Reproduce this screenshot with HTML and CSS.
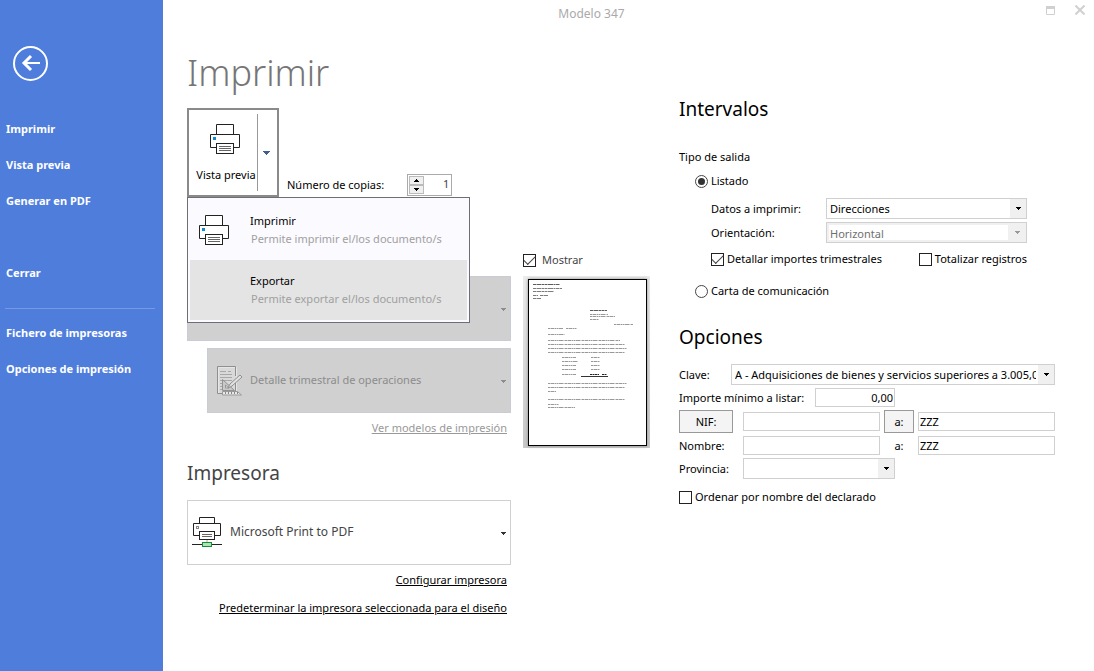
FILE: index.html
```html
<!DOCTYPE html>
<html lang="es">
<head>
<meta charset="utf-8">
<meta name="viewport" content="width=device-width, initial-scale=1">
<title>Modelo 347</title>
<link rel="stylesheet" href="styles.css">
</head>
<body>
<svg class="defs" aria-hidden="true">
  <symbol id="printer" viewBox="0 0 30 30">
    <path d="M6.5 10V.5h17V10M6.500 23.500H.5v-13h29v13h-6" fill="#fff" stroke="#222" />
    <rect x="6.500" y="19.500" width="17" height="10" fill="#fff" stroke="#222" />
    <path d="M9 22.500h12M9 24.500h12M9 26.500h12" stroke="#666" />
    <rect x="3" y="13" width="3" height="3" fill="#0f8ad4" />
  </symbol>
  <symbol id="arrow" viewBox="0 0 7 4"><path d="M0 0h7v1h-1v1h-1v1h-1v1h-1v-1h-1v-1h-1v-1h-1z" fill="currentColor" /></symbol>
  <symbol id="arrow-small" viewBox="0 0 5 3"><path d="M0 0h5v1h-1v1h-1v1h-1v-1h-1v-1h-1z" fill="currentColor" /></symbol>
</svg>
<div class="app">
  <aside class="sidebar">
    <button class="back" type="button" aria-label="Volver">
      <svg viewBox="0 0 35 35" width="35" height="35" fill="none" stroke="#fff"><circle cx="17.500" cy="17.500" r="16.500" stroke-width="2" /><path d="M10 17H27" stroke-width="2" /><path d="M18 10L11 17L18 24" stroke-width="3" /></svg>
    </button>
    <nav class="nav">
      <a href="#">Imprimir</a>
      <a href="#">Vista previa</a>
      <a href="#">Generar en PDF</a>
      <a class="nav-close" href="#">Cerrar</a>
      <hr>
      <a href="#">Fichero de impresoras</a>
      <a href="#">Opciones de impresión</a>
    </nav>
  </aside>
  <main class="main">
    <header class="titlebar">
      <span class="titlebar-text">Modelo 347</span>
      <span class="window-buttons">
        <button type="button" aria-label="Maximizar"><svg width="9" height="9" viewBox="0 0 9 9"><path d="M.5.5h8v8h-8z" fill="none" stroke="#d0d0d0" /><path d="M0 0h9v3H0z" fill="#d0d0d0" /></svg></button>
        <button type="button" aria-label="Cerrar ventana"><svg width="10" height="10" viewBox="0 0 10 10"><path d="M.5.500l9 9M9.500.500l-9 9" stroke="#d0d0d0" stroke-width="2" /></svg></button>
      </span>
    </header>
    <h1>Imprimir</h1>
    <div class="columns">
      <section class="print">
        <div class="tools">
          <div class="split">
            <button class="split-main" type="button"><svg width="30" height="30"><use href="#printer" /></svg><span>Vista previa</span></button>
            <button class="split-arrow" type="button" aria-label="Más acciones"><svg width="7" height="4"><use href="#arrow" /></svg></button>
            <div class="menu" role="menu">
              <button class="menu-item" type="button" role="menuitem"><svg width="30" height="30"><use href="#printer" /></svg><span class="menu-text"><span>Imprimir</span><small>Permite imprimir el/los documento/s</small></span></button>
              <button class="menu-item menu-item-active" type="button" role="menuitem"><span class="menu-text"><span>Exportar</span><small>Permite exportar el/los documento/s</small></span></button>
            </div>
          </div>
          <div class="copies">
            <label for="copies">Número de copias:</label>
            <span class="spinner">
              <span class="spinner-buttons">
                <button type="button" aria-label="Aumentar"><svg class="flip" width="5" height="3"><use href="#arrow-small" /></svg></button>
                <button type="button" aria-label="Reducir"><svg width="5" height="3"><use href="#arrow-small" /></svg></button>
              </span>
              <input id="copies" type="text" inputmode="numeric" value="1">
            </span>
          </div>
        </div>
        <div class="card card-disabled card-model">
          <select aria-label="Modelo" disabled><option></option></select>
          <svg class="caret" width="5" height="3"><use href="#arrow-small" /></svg>
        </div>
        <div class="card card-disabled card-detail">
          <svg class="card-icon" width="26" height="30" viewBox="0 0 26 30" fill="none">
            <path d="M1.500 27.500h18v-26h-18z" fill="#d9d9d9" stroke="#e6e6e6" />
            <path d="M5 27.500H.5v-27h18V10M18.500 17v8" stroke="#8f8f8f" />
            <path d="M3 5.500h6M11 5.500h3M3 8.500h12M3 11.500h12M3 14.500h12M3 17.500h2M3 20.500h2M3 23.500h2" stroke="#a8a8a8" />
            <path d="M5.500 24.500v-11l12 11z" fill="#c9c9c9" stroke="#929292" />
            <path d="M8.500 22v-3l3.500 3z" fill="#e5e5e5" stroke="#999" />
            <path d="M11 22l2-4L23 9l2 2-10 9z" fill="#e2e2e2" stroke="#8f8f8f" />
            <path d="M5.500 25.500h15l4 3.500h-19z" fill="#e8e8e8" stroke="#999" />
            <path d="M8.500 26v2M11.500 26v2M14.500 26v2M17.500 26v2M20.500 26v2" stroke="#888" />
          </svg>
          <select aria-label="Detalle" disabled><option>Detalle trimestral de operaciones</option></select>
          <svg class="caret" width="5" height="3"><use href="#arrow-small" /></svg>
        </div>
        <p class="link-row link-row-models"><a class="muted" href="#">Ver modelos de impresión</a></p>
        <h2 class="printer-title">Impresora</h2>
        <div class="card card-printer">
          <svg class="card-icon" width="30" height="31" viewBox="0 0 30 31" fill="none">
            <path d="M7.500 6V.5h15V6M7.500 18.500h-6v-12h27v12h-6" stroke="#222" />
            <rect x="7.500" y="14.500" width="15" height="8" fill="#fff" stroke="#222" />
            <path d="M10 17.500h10M10 19.500h10" stroke="#666" />
            <rect x="4.500" y="9.500" width="2" height="2" stroke="#888" />
            <path d="M15 23v2" stroke="#aaa" /><path d="M0 27.500h30" stroke="#222" />
            <rect x="10.500" y="25.500" width="9" height="4" fill="#b4dfbb" stroke="#119130" />
          </svg>
          <select aria-label="Impresora"><option>Microsoft Print to PDF</option></select>
          <svg class="caret" width="5" height="3"><use href="#arrow-small" /></svg>
        </div>
        <p class="link-row link-row-config"><a href="#">Configurar impresora</a></p>
        <p class="link-row link-row-default"><a href="#">Predeterminar la impresora seleccionada para el diseño</a></p>
      </section>

      <section class="preview">
        <label class="check preview-check"><input type="checkbox" checked>Mostrar</label>
        <div class="sheet-frame">
          <svg class="sheet" viewBox="0 0 117 165" role="img" aria-label="Carta">
            <g stroke="#333" stroke-dasharray="3 .5 5 .5 2 .5" opacity=".8">
              <path d="M4 4.500h27M61 30.500h17" stroke-width="1.200" />
              <path d="M4 8.500h29M4 11.500h21M4 15.500h5M11 15.500h8M4 18.500h8" stroke-width=".8" />
            </g>
            <g stroke="#555" stroke-width=".8" stroke-dasharray="2 .5 4 .5 1 .5" opacity=".75">
              <path d="M61 34.500h18M61 36.500h25M61 39.500h9M85 44.500h19M19 48.500h15M37 48.500h11M19 54.500h17" />
              <path d="M19 60.500h72M19 64.500h77M19 68.500h79M19 72.500h77" />
              <path d="M33 77.500h14M33 81.500h16M33 85.500h14M33 89.500h14M33 94.500h14M62 77.500h9M62 81.500h9M62 85.500h9M62 89.500h9" />
              <path d="M19 103.500h79M19 107.500h77M19 111.500h8M19 119.500h77M19 124.500h11M19 127.500h27" />
            </g>
            <path d="M61 94.500h9M73 94.500h5" stroke="#222" stroke-dasharray="2 .5" />
            <path d="M52 96.500h27" stroke="#333" />
          </svg>
        </div>
      </section>

      <form class="settings">
        <h2>Intervalos</h2>
        <fieldset>
          <legend>Tipo de salida</legend>
          <label class="check radio-listed"><input type="radio" name="output" checked>Listado</label>
          <div class="sub">
            <div class="row row-data">
              <label for="data">Datos a imprimir:</label>
              <span class="select"><select id="data"><option>Direcciones</option></select><span class="select-button"><svg width="5" height="3"><use href="#arrow-small" /></svg></span></span>
            </div>
            <div class="row">
              <label for="orientation">Orientación:</label>
              <span class="select select-disabled"><select id="orientation" disabled><option>Horizontal</option></select><span class="select-button"><svg width="5" height="3"><use href="#arrow-small" /></svg></span></span>
            </div>
            <div class="checks">
              <label class="check"><input type="checkbox" checked>Detallar importes trimestrales</label>
              <label class="check"><input type="checkbox">Totalizar registros</label>
            </div>
          </div>
          <label class="check radio-letter"><input type="radio" name="output">Carta de comunicación</label>
        </fieldset>
        <h2 class="options-title">Opciones</h2>
        <div class="row row-key">
          <label for="key">Clave:</label>
          <span class="select"><select id="key"><option>A - Adquisiciones de bienes y servicios superiores a 3.005,06 euros</option></select><span class="select-button"><svg width="5" height="3"><use href="#arrow-small" /></svg></span></span>
        </div>
        <div class="row row-amount">
          <label for="amount">Importe mínimo a listar:</label>
          <input class="field amount" id="amount" type="text" value="0,00">
        </div>
        <div class="range">
          <button class="push push-nif" type="button">NIF:</button>
          <input class="field" type="text" aria-label="NIF desde">
          <button class="push push-to" type="button">a:</button>
          <input class="field" type="text" aria-label="NIF hasta" value="ZZZ">
        </div>
        <div class="range">
          <label for="name-from">Nombre:</label>
          <input class="field" id="name-from" type="text">
          <label class="to" for="name-to">a:</label>
          <input class="field" id="name-to" type="text" value="ZZZ">
        </div>
        <div class="row row-province">
          <label for="province">Provincia:</label>
          <span class="select"><select id="province"><option></option></select><span class="select-button"><svg width="5" height="3"><use href="#arrow-small" /></svg></span></span>
        </div>
        <label class="check order"><input type="checkbox">Ordenar por nombre del declarado</label>
      </form>
    </div>
  </main>
</div>
</body>
</html>
```
FILE: styles.css
```css
* { box-sizing: border-box; }
body {
  margin: 0;
  background: #fff;
  color: #000;
  font: 11px/18px "Noto Sans", "Open Sans", sans-serif;
}
button, input, select { font: inherit; color: inherit; border-radius: 0; margin: 0; }
button { padding: 0; border: 0; background: none; }
svg { display: block; flex: none; }
.defs { position: absolute; width: 0; height: 0; }

.app { display: grid; grid-template-columns: 163px 1fr; min-height: 100vh; }

.sidebar { background: #4e7ddc; padding-top: 46px; }
.back { display: block; margin-left: 13px; }
.nav { display: flex; flex-direction: column; margin-top: 30px; }
.nav a {
  padding: 0 6px;
  color: #fff;
  font-weight: 700;
  line-height: 36px;
  text-decoration: none;
  white-space: nowrap;
}
.nav .nav-close { margin-top: 36px; }
.nav hr { width: 150px; height: 1px; margin: 17px 5px 6px; border: 0; background: #7898e4; }

.main { padding: 0 39px 24px 24px; }
.titlebar { display: flex; align-items: center; height: 28px; margin: 0 -39px 0 -24px; }
.titlebar-text { flex: 1; text-align: center; font-size: 12px; color: #aaa; }
.window-buttons { display: flex; gap: 20px; width: 74px; padding: 0 9px 8px 26px; align-items: center; }

h1, h2, p { margin: 0; font-weight: 400; }
h1 { padding-top: 22px; font-size: 36px; line-height: 45px; font-weight: 300; color: #767676; }
h2 { font-size: 19px; line-height: 28px; }

.columns { display: grid; grid-template-columns: 324fr 168px 376fr; }
.print, .settings { min-width: 0; }
.preview { margin-left: 12px; width: 127px; }

.tools { display: flex; gap: 8px; align-items: flex-end; margin-top: 13px; }
.split { position: relative; display: flex; width: 92px; height: 89px; border: 2px solid #8a8a8a; }
.split-main { display: flex; flex-direction: column; align-items: center; width: 68px; padding: 14px 0 0 6px; white-space: nowrap; }
.split-main svg { margin-right: 3px; }
.split-main span { margin-top: 12px; }
.split-arrow { flex: 1; display: flex; align-items: center; justify-content: center; margin: 4px 0; padding-right: 3px; border-left: 1px solid #999; color: #465c8c; }
.menu {
  position: absolute;
  top: 87px;
  left: -2px;
  width: 283px;
  padding: 0 2px 2px;
  border: 1px solid #6e6e76;
  background: #fbfaff;
  z-index: 1;
}
.menu-item { display: flex; align-items: center; width: 100%; height: 62px; padding: 2px 0 0 9px; text-align: left; }
.menu-item-active { height: 60px; background: #e4e4e4; padding: 0 0 0 60px; }
.menu-text { display: flex; flex-direction: column; }
.menu-item svg + .menu-text { margin-left: 21px; }
.menu-text small { font-size: 11px; color: #a0a0a0; padding-left: 1px; }

.copies { display: flex; align-items: center; gap: 23px; height: 24px; }
.spinner { display: flex; width: 45px; height: 22px; border: 1px solid #aaa; padding: 1px; }
.spinner-buttons { display: grid; width: 15px; flex: none; }
.spinner-buttons button { display: flex; align-items: center; justify-content: center; border: 1px solid #bbb; background: #f0f0f0; }
.flip { transform: rotate(180deg); }
.spinner input { flex: 1; min-width: 0; border: 0; padding: 0 1px 2px; text-align: right; background: none; color: #444; }

.card { position: relative; height: 65px; border: 1px solid #d0d0d0; }
.card select {
  width: 100%;
  height: 100%;
  padding: 0 20px 2px 42px;
  border: 0;
  background: none;
  color: #444;
  appearance: none;
  opacity: 1;
}
.card-printer select { font-size: 12px; }
.card-icon { position: absolute; left: 4px; top: 16px; }
.caret { position: absolute; right: 4px; top: 31px; color: #333; }
.card-disabled { border-color: #c9ccd4; background: #d0d0d0; }
.card-disabled select, .card-disabled .caret { color: #8c8c8c; }
.card-model { margin-top: 79px; }
.card-detail { margin: 7px 0 0 20px; }
.card-detail .card-icon { left: 9px; top: 17px; }
.link-row { padding-right: 4px; text-align: right; }
.link-row a { color: #000; }
.link-row .muted { color: #999; }
.link-row-models { margin-top: 6px; }
.link-row-config { margin-top: 6px; }
.link-row-default { margin-top: 10px; }
.printer-title { margin: 22px 0 13px; color: #444; }

.check { display: flex; align-items: center; gap: 3px; white-space: nowrap; }
.check input {
  display: grid;
  place-content: center;
  flex: none;
  width: 13px;
  height: 13px;
  border: 1px solid #222;
  background: #fff;
  appearance: none;
}
.check input[type="checkbox"]:checked::before {
  content: "";
  width: 10px;
  height: 5px;
  border: solid #444;
  border-width: 0 0 1px 1px;
  transform: translateY(-1px) rotate(-45deg);
}
.check input[type="radio"] { border-color: #444; border-radius: 50%; }
.check input[type="radio"]:checked::before { content: ""; width: 7px; height: 7px; border-radius: 50%; background: #333; }

.preview-check { margin-top: 156px; gap: 6px; color: #444; }
.sheet-frame { margin-top: 7px; padding: 3px 3px 2px 5px; background: linear-gradient(#ececec, #c8c8c8); }
.sheet { width: 100%; border: 1px solid #000; background: #fff; box-shadow: 0 0 3px #888; }

fieldset { margin: 0; padding: 0; border: 0; }
legend { padding: 25px 0 0; }
.radio-listed { margin: 6px 0 0 16px; }
.sub { padding: 8px 28px 0 32px; }
.row { display: flex; align-items: center; margin-top: 3px; }
.sub .row label { width: 115px; }
.row-data { margin-top: 0; }
.checks { display: flex; justify-content: space-between; margin-top: 7px; }
.radio-letter { margin: 14px 0 0 16px; }

.select { position: relative; flex: 1; min-width: 0; height: 21px; border: 1px solid #d0d0d0; }
.select select { display: block; width: 100%; height: 100%; padding: 0 18px 0 3px; border: 0; background: #fff; appearance: none; opacity: 1; }
.select-button { position: absolute; top: 0; right: 0; bottom: 0; display: grid; place-content: center; width: 16px; background: #f0f0f0; pointer-events: none; }
.select-disabled { background: #f0f0f0; color: #707070; }
.select-disabled select { border: 2px solid #f0f0f0; padding-left: 1px; }
.select-disabled .select-button { color: #999; width: 18px; }

.options-title { margin: 23px 0 13px; }
.row-key label { width: 52px; }
.field { width: 100%; min-width: 0; height: 19px; padding: 0 1px; border: 1px solid #d0d0d0; background: #fff; }
.row .amount { width: 80px; text-align: right; }
.row-amount label { width: 136px; }
.range { display: grid; grid-template-columns: 64px 1fr 38px 1fr; align-items: center; margin-top: 3px; }
.push { height: 23px; border: 1px solid #999; background: #f4f4f4; }
.push-nif { width: 54px; }
.push-to { margin: 0 4px; }
.to { text-align: center; }
.row-province label { width: 64px; }
.row-province .select { flex: none; width: 152px; }
.order { margin-top: 9px; }
```
